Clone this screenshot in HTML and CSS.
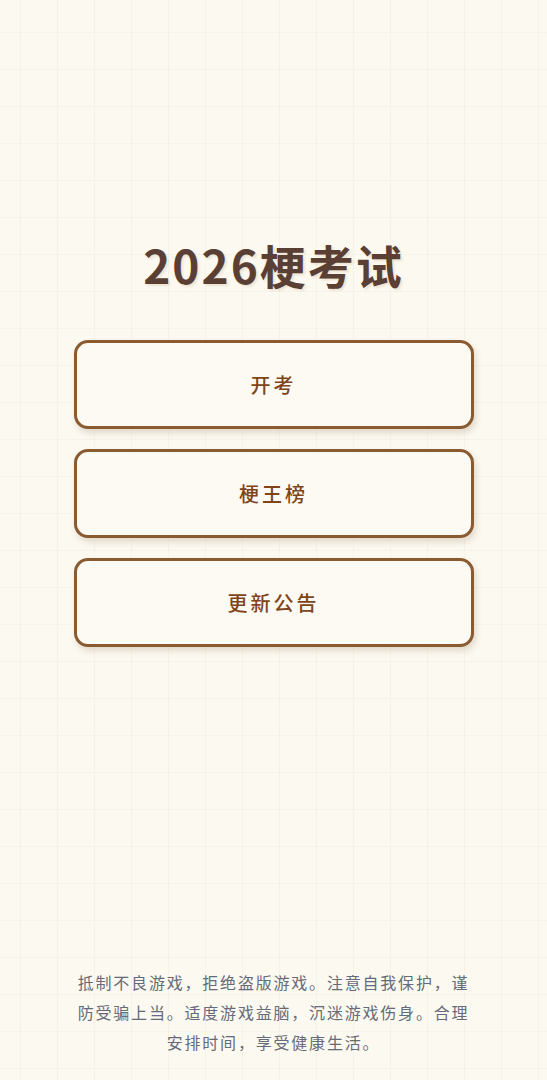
FILE: index.html
```html
<!DOCTYPE html>
<html lang="zh-CN">
<head>
  <meta charset="UTF-8">
  <meta name="viewport" content="width=device-width, initial-scale=1.0">
  <title>2026梗考试</title>
  <link rel="stylesheet" href="styles.css">
</head>
<body>
  <div class="page">
    <div class="main">
      <h1 class="title">2026梗考试</h1>
      <div class="menu">
        <button class="menu-btn">开考</button>
        <button class="menu-btn">梗王榜</button>
        <button class="menu-btn">更新公告</button>
      </div>
    </div>

    <!-- 健康游戏忠告 -->
    <div class="footer">
      抵制不良游戏，拒绝盗版游戏。注意自我保护，谨防受骗上当。适度游戏益脑，沉迷游戏伤身。合理安排时间，享受健康生活。
    </div>
  </div>
</body>
</html>
```

FILE: styles.css
```css
body {
  margin: 0;
  padding: 0;
  font-family: "Noto Sans CJK SC", "Noto Sans", sans-serif;
  background-color: #fcf9f1;
  background-image:
    linear-gradient(to right, rgba(225, 215, 195, 0.18) 1px, transparent 1px),
    linear-gradient(to bottom, rgba(225, 215, 195, 0.18) 1px, transparent 1px);
  background-size: 37px 37px;
  background-position: 20px 32px;
}

.page {
  min-height: 100vh;
  display: flex;
  flex-direction: column;
  align-items: center;
}

.main {
  flex: 1;
  display: flex;
  flex-direction: column;
  align-items: center;
  padding-top: 237px;
}

.title {
  margin: 0 0 49px;
  font-size: 46px;
  line-height: 54px;
  font-weight: 700;
  letter-spacing: 2px;
  color: #5a4034;
  text-shadow: 2px 2px 2px rgba(200, 170, 130, 0.25);
}

.menu {
  display: flex;
  flex-direction: column;
  gap: 20px;
  width: 400px;
}

.menu-btn {
  height: 89px;
  background: #fdfaf3;
  border: 3px solid #8a5a30;
  border-radius: 14px;
  box-shadow: 2px 4px 6px rgba(120, 90, 50, 0.2);
  font-family: "Noto Sans CJK SC", "Noto Sans", sans-serif;
  font-size: 20px;
  font-weight: 500;
  letter-spacing: 3px;
  color: #7f4519;
  cursor: pointer;
}

.footer {
  width: 400px;
  padding-bottom: 23px;
  font-size: 16px;
  line-height: 30px;
  letter-spacing: 1.8px;
  color: #656b78;
  text-align: center;
}
```
